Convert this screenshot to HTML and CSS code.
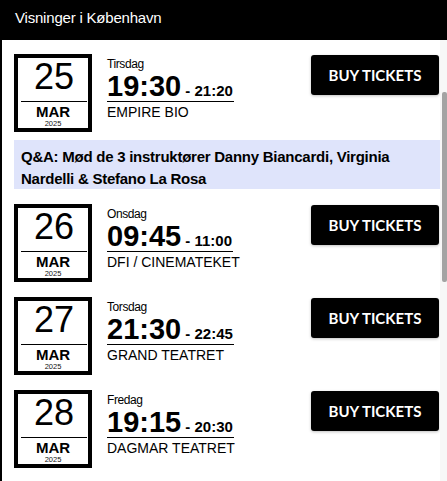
FILE: index.html
```html
<!DOCTYPE html>
<html lang="da">

<head>
    <meta charset="UTF-8">
    <meta name="viewport" content="width=device-width, initial-scale=1.0">
    <title>Visninger i København</title>
    <link rel="stylesheet" href="styles.css">
</head>

<body>
    <div class="panel">
        <div class="panel-head">Visninger i København</div>

        <div class="panel-body">
            <div class="show">
                <div class="row">
                    <div class="date">
                        <div class="day">25</div>
                        <div class="month">MAR</div>
                        <div class="year">2025</div>
                    </div>
                    <div class="info">
                        <div class="weekday">Tirsdag</div>
                        <div class="time"><span class="start">19:30</span> - 21:20</div>
                        <div class="venue">EMPIRE BIO</div>
                    </div>
                    <a href="javascript:;" class="buy">BUY TICKETS</a>
                </div>
                <div class="note">Q&amp;A: Mød de 3 instruktører Danny Biancardi, Virginia Nardelli &amp; Stefano La Rosa</div>
            </div>

            <div class="show">
                <div class="row">
                    <div class="date">
                        <div class="day">26</div>
                        <div class="month">MAR</div>
                        <div class="year">2025</div>
                    </div>
                    <div class="info">
                        <div class="weekday">Onsdag</div>
                        <div class="time"><span class="start">09:45</span> - 11:00</div>
                        <div class="venue">DFI / CINEMATEKET</div>
                    </div>
                    <a href="javascript:;" class="buy">BUY TICKETS</a>
                </div>
            </div>

            <div class="show">
                <div class="row">
                    <div class="date">
                        <div class="day">27</div>
                        <div class="month">MAR</div>
                        <div class="year">2025</div>
                    </div>
                    <div class="info">
                        <div class="weekday">Torsdag</div>
                        <div class="time"><span class="start">21:30</span> - 22:45</div>
                        <div class="venue">GRAND TEATRET</div>
                    </div>
                    <a href="javascript:;" class="buy">BUY TICKETS</a>
                </div>
            </div>

            <div class="show">
                <div class="row">
                    <div class="date">
                        <div class="day">28</div>
                        <div class="month">MAR</div>
                        <div class="year">2025</div>
                    </div>
                    <div class="info">
                        <div class="weekday">Fredag</div>
                        <div class="time"><span class="start">19:15</span> - 20:30</div>
                        <div class="venue">DAGMAR TEATRET</div>
                    </div>
                    <a href="javascript:;" class="buy">BUY TICKETS</a>
                </div>
            </div>

            <!-- rullebjælke -->
            <div class="scroll-track"><div class="scroll-thumb"></div></div>
        </div>
    </div>
</body>

</html>
```

FILE: styles.css
```css
* {
    margin: 0;
    padding: 0;
    box-sizing: border-box;
}

body {
    font-family: "Liberation Sans", Arial, sans-serif;
    color: #000;
    background-color: #fff;
}

.panel-head {
    height: 40px;
    padding: 6px 15px 0;
    line-height: 24px;
    font-size: 15px;
    letter-spacing: -0.2px;
    color: #fff;
    background-color: #000;
}

.panel-body {
    position: relative;
    min-height: 441px;
    padding: 14px 7px 0 12px;
    border-left: 2px solid #000;
}

.show {
    margin-bottom: 15px;
}

.row {
    display: flex;
    align-items: flex-start;
}

/* datoboksen */
.date {
    width: 78px;
    height: 78px;
    border: 4px solid #000;
    text-align: center;
}

.date .day {
    margin: 0 1px 0 3px;
    padding-bottom: 5px;
    border-bottom: 1px solid #000;
    font-size: 36px;
    line-height: 38px;
}

.date .month {
    margin-top: 2px;
    font-size: 15px;
    font-weight: bold;
    line-height: 16px;
}

.date .year {
    font-size: 7.5px;
    line-height: 8px;
    color: #111;
}

.info {
    display: flex;
    flex-direction: column;
    align-items: flex-start;
    margin-left: 15px;
    padding-top: 3px;
}

.info .weekday {
    font-size: 12px;
    line-height: 14px;
    letter-spacing: -0.4px;
}

.info .time {
    padding-right: 1px;
    font-size: 15px;
    font-weight: bold;
    line-height: 1;
    border-bottom: 1px solid #000;
}

.info .time .start {
    font-size: 29px;
    line-height: 30px;
}

.info .venue {
    margin-top: 2px;
    font-size: 14px;
    line-height: 16px;
}

.buy {
    display: block;
    width: 128px;
    height: 40px;
    margin: 1px 1px 0 auto;
    line-height: 40px;
    text-align: center;
    font-family: Lato, sans-serif;
    font-size: 15px;
    font-weight: bold;
    color: #fff;
    text-decoration: none;
    background-color: #000;
    border-radius: 3px;
    box-shadow: 0 1px 3px rgba(0, 0, 0, 0.25);
}

.note {
    margin-top: 8px;
    padding: 6px 7px 0;
    height: 49px;
    font-size: 15px;
    font-weight: bold;
    line-height: 21.5px;
    letter-spacing: -0.25px;
    background-color: #dfe4fb;
}

.scroll-track {
    position: absolute;
    top: 0;
    right: 0;
    bottom: 0;
    width: 7px;
    background-color: #f7f7f7;
}

.scroll-thumb {
    margin: 52px 0 0 2px;
    width: 5px;
    height: 190px;
    background-color: #a3a3a3;
    border-radius: 2px;
}
```
